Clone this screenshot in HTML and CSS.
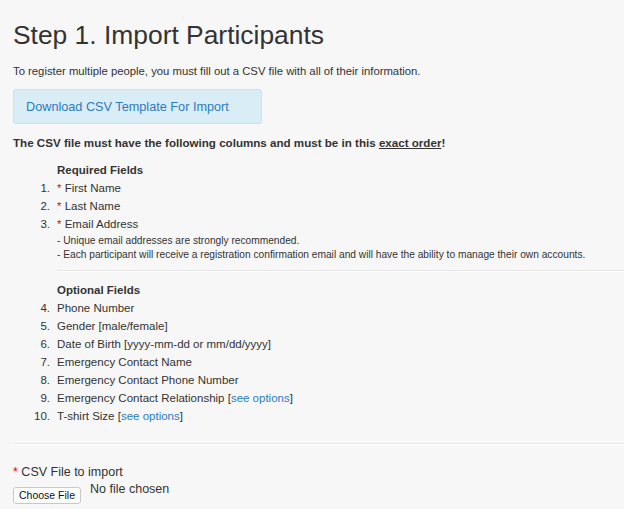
FILE: index.html
```html
<!DOCTYPE html>
<html>
<head>
<meta charset="utf-8">
<link rel="stylesheet" href="styles.css">
</head>
<body>
<div class="page">
  <h1 class="title">Step 1. Import Participants</h1>
  <p class="intro">To register multiple people, you must fill out a CSV file with all of their information.</p>
  <div class="download-box"><a class="download-link" href="#">Download CSV Template For Import</a></div>
  <p class="order-note">The CSV file must have the following columns and must be in this <u>exact order</u>!</p>
  <ol class="fields">
    <li class="group-title">Required Fields</li>
    <li class="field"><span class="num">1.</span><span class="text"><span class="req">*</span> First Name</span></li>
    <li class="field"><span class="num">2.</span><span class="text"><span class="req">*</span> Last Name</span></li>
    <li class="field"><span class="num">3.</span><span class="text"><span class="req">*</span> Email Address</span></li>
    <li class="notes">
      <div>- Unique email addresses are strongly recommended.</div>
      <div>- Each participant will receive a registration confirmation email and will have the ability to manage their own accounts.</div>
    </li>
    <li class="divider"></li>
    <li class="group-title">Optional Fields</li>
    <li class="field"><span class="num">4.</span><span class="text">Phone Number</span></li>
    <li class="field"><span class="num">5.</span><span class="text">Gender [male/female]</span></li>
    <li class="field"><span class="num">6.</span><span class="text">Date of Birth [yyyy-mm-dd or mm/dd/yyyy]</span></li>
    <li class="field"><span class="num">7.</span><span class="text">Emergency Contact Name</span></li>
    <li class="field"><span class="num">8.</span><span class="text">Emergency Contact Phone Number</span></li>
    <li class="field"><span class="num">9.</span><span class="text">Emergency Contact Relationship [<a href="#">see options</a>]</span></li>
    <li class="field"><span class="num">10.</span><span class="text">T-shirt Size [<a href="#">see options</a>]</span></li>
  </ol>
  <hr class="rule">
  <div class="upload">
    <label class="upload-label"><span class="req">*</span> CSV File to import</label>
    <div class="file-row"><button class="choose-btn" type="button">Choose File</button><span class="no-file">No file chosen</span></div>
  </div>
</div>
</body>
</html>
```
FILE: styles.css
```css
html, body {
  margin: 0;
  padding: 0;
  background: #f7f7f7;
}
body {
  font-family: "Liberation Sans", Arial, sans-serif;
  color: #333;
  font-size: 11.5px;
  overflow: hidden;
}
.page {
  padding: 18px 0 0 13px;
}
.title {
  margin: 0;
  font-size: 26.4px;
  font-weight: normal;
  line-height: 34px;
  color: #333;
}
.intro {
  margin: 11px 0 0;
  line-height: 16px;
  font-size: 11.3px;
}
.download-box {
  margin-top: 10px;
  background: #d9edf7;
  border: 1px solid #bce8f1;
  border-radius: 3px;
  display: flex;
  align-items: center;
  padding-left: 12px;
  box-sizing: border-box;
  width: 249px;
  height: 35px;
}
.download-link {
  color: #2b7bc0;
  text-decoration: none;
  font-size: 12.7px;
}
.order-note {
  margin: 11px 0 0;
  font-weight: bold;
  line-height: 16px;
  font-size: 11.6px;
}
.order-note u {
  text-decoration: underline;
}
.fields {
  list-style: none;
  margin: 10px 0 0;
  padding: 0;
}
.group-title {
  font-weight: bold;
  padding-left: 44px;
  line-height: 18px;
}
.field {
  display: flex;
  line-height: 18px;
}
.num {
  width: 37px;
  text-align: right;
  flex: none;
}
.text {
  padding-left: 7px;
}
.req {
  color: #e00;
}
.fields a, .upload a {
  color: #2b7bc0;
  text-decoration: none;
}
.notes {
  padding-left: 44px;
  font-size: 10.2px;
  line-height: 14px;
  margin-top: 1px;
}
.divider {
  margin: 8px 0 9px 44px;
  border-top: 1px solid #e6e6e6;
  border-bottom: 1px solid #fff;
}
.rule {
  margin: 18px 0 0;
  border: 0;
  border-top: 1px solid #e6e6e6;
  border-bottom: 1px solid #fff;
}
.upload {
  margin-top: 18px;
}
.upload-label {
  display: block;
  font-size: 12.5px;
  line-height: 18px;
}
.file-row {
  display: flex;
  align-items: flex-start;
}
.choose-btn {
  font-family: "Liberation Sans", Arial, sans-serif;
  font-size: 10.5px;
  color: #111;
  background: #fff;
  border: 1px solid #c8c8c8;
  border-radius: 3px;
  height: 17px;
  padding: 0 5px;
  margin-top: 6px;
  line-height: 15px;
}
.no-file {
  margin-left: 9px;
  font-size: 12.5px;
  line-height: 16px;
}
```
